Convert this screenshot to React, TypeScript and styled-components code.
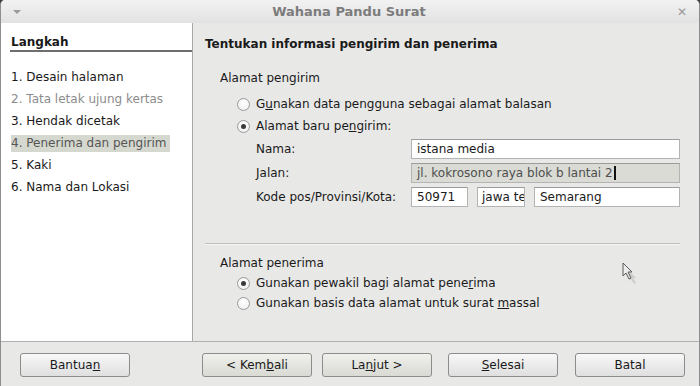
import React from "react";
import styled, {createGlobalStyle} from "styled-components";

const GlobalStyle = createGlobalStyle`
  html, body {
    margin: 0;
    padding: 0;
    background: #3c3c3c;
  }
  body {
    font-family: "DejaVu Sans", "Liberation Sans", sans-serif;
    font-size: 12px;
    color: #1a1a1a;
  }
`;

const Window = styled.div`
  width: 700px;
  height: 386px;
  box-sizing: border-box;
  display: flex;
  flex-direction: column;
  background: #e8e8e7;
  border-left: 1px solid #8e8e8e;
  border-right: 1px solid #8e8e8e;
  border-radius: 5px 5px 0 0;
  overflow: hidden;
`;

const TitleBar = styled.div`
  height: 23px;
  flex: none;
  display: flex;
  align-items: center;
  justify-content: space-between;
  padding: 0 12px 0 12px;
  background: linear-gradient(#f2f2f2, #e2e2e2);
  .title {
    font-size: 13px;
    font-weight: bold;
    color: #7c7c7c;
  }
  .menu {
    width: 0;
    height: 0;
    border-left: 4px solid transparent;
    border-right: 4px solid transparent;
    border-top: 4px solid #9a9a9a;
  }
  .close {
    color: #9a9a9a;
    font-size: 12px;
    font-weight: bold;
  }
`;

const Body = styled.div`
  flex: 1;
  display: flex;
  min-height: 0;
`;

const Sidebar = styled.div`
  width: 192px;
  flex: none;
  box-sizing: border-box;
  background: #ffffff;
  border-right: 1px solid #a8a8a8;
  padding: 11px 0 0 9px;
`;

const SideHeading = styled.div`
  font-weight: bold;
  line-height: 16px;
  padding-left: 1px;
  border-bottom: 2px solid #6e6e6e;
  margin-bottom: 14px;
`;

const StepRow = styled.div`
  height: 22px;
  display: flex;
  align-items: center;
  padding-left: 1px;
`;

const StepText = styled.span<{ $active?: boolean; $disabled?: boolean }>`
  line-height: 17px;
  padding-right: 3px;
  background: ${p => p.$active ? "#d5d8cf" : "transparent"};
  color: ${p => p.$disabled ? "#8c8c8c" : p.$active ? "#555" : "#1a1a1a"};
`;

const Main = styled.div`
  flex: 1;
  display: flex;
  flex-direction: column;
  padding: 13px 19px 0 12px;
`;

const PageHeading = styled.div`
  font-weight: bold;
  line-height: 16px;
  margin-bottom: 18px;
`;

const Section = styled.div`
  padding-left: 15px;
`;

const SectionTitle = styled.div`
  line-height: 16px;
`;

const Options = styled.div<{ $row: number; $top: number }>`
  padding-left: 17px;
  margin-top: ${p => p.$top}px;
  display: flex;
  flex-direction: column;
  > div {
    height: ${p => p.$row}px;
  }
`;

const OptionRow = styled.div`
  display: flex;
  align-items: center;
  gap: 6px;
`;

const Radio = styled.span<{ $checked?: boolean }>`
  width: 11px;
  height: 11px;
  flex: none;
  border-radius: 50%;
  border: 1px solid #9a9a9a;
  background: radial-gradient(circle at 50% 35%, #ffffff, #ececec);
  display: flex;
  align-items: center;
  justify-content: center;
  &::after {
    content: "";
    width: 5px;
    height: 5px;
    border-radius: 50%;
    background: ${p => p.$checked ? "#3a3a3a" : "transparent"};
  }
`;

const FormGrid = styled.div`
  display: grid;
  grid-template-columns: 155px 1fr;
  row-gap: 4px;
  margin: 2px 0 0 36px;
  align-items: center;
`;

const FieldRow = styled.div`
  display: flex;
  gap: 9px;
`;

const Field = styled.div<{ $width?: number; $selected?: boolean; $tight?: boolean }>`
  ${p => p.$width ? `width: ${p.$width}px; flex: none;` : "flex: 1;"}
  height: 20px;
  box-sizing: border-box;
  border: 1px solid #b4b4b4;
  border-top-color: #9c9c9c;
  background: ${p => p.$selected ? "#d9dbd4" : "#ffffff"};
  color: ${p => p.$selected ? "#4e4e4e" : "#1a1a1a"};
  padding: ${p => p.$tight ? "0 0 0 4px" : "0 5px"};
  line-height: 18px;
  white-space: nowrap;
  overflow: hidden;
  display: flex;
  align-items: center;
`;

const Caret = styled.span`
  width: 2px;
  height: 14px;
  flex: none;
  background: #111;
  margin-left: 1px;
`;

const Separator = styled.div`
  margin: 36px 0 10px 0;
  border-top: 1px solid #bdbdbd;
  border-bottom: 1px solid #f6f6f6;
`;

const CursorArea = styled.div`
  position: relative;
  svg {
    position: absolute;
    left: 401px;
    top: 6px;
  }
`;

const Footer = styled.div`
  height: 45px;
  flex: none;
  box-sizing: border-box;
  border-top: 1px solid #b0b0b0;
  display: flex;
  align-items: flex-start;
  padding: 11px 14px 0 19px;
`;

const Button = styled.button<{ $hover?: boolean; $space?: number }>`
  width: 110px;
  height: 24px;
  flex: none;
  margin-left: ${p => p.$space ?? 0}px;
  border: 1px solid #8c8c8c;
  border-radius: 3px;
  background: ${p => p.$hover
    ? "linear-gradient(#f0f0ec, #d9dad4)"
    : "linear-gradient(#f8f8f8, #dfdfdf)"};
  font-family: inherit;
  font-size: 12px;
  color: #1a1a1a;
  padding: 0;
`;

const ButtonGroup = styled.div`
  margin-left: auto;
  display: flex;
`;

const steps = [
  "Desain halaman",
  "Tata letak ujung kertas",
  "Hendak dicetak",
  "Penerima dan pengirim",
  "Kaki",
  "Nama dan Lokasi",
];

const App: React.FC = () => {
  return (
    <>
      <GlobalStyle/>
      <Window>
        <TitleBar>
          <span className={"menu"}/>
          <span className={"title"}>Wahana Pandu Surat</span>
          <span className={"close"}>✕</span>
        </TitleBar>
        <Body>
          <Sidebar>
            <SideHeading>Langkah</SideHeading>
            {steps.map((s, i) => (
              <StepRow key={s}>
                <StepText $active={i === 3} $disabled={i === 1}>{i + 1}. {s}</StepText>
              </StepRow>
            ))}
          </Sidebar>
          <Main>
            <PageHeading>Tentukan informasi pengirim dan penerima</PageHeading>
            <Section>
              <SectionTitle>Alamat pengirim</SectionTitle>
              <Options $row={22} $top={7}>
                <OptionRow><Radio/><span>G<u>u</u>nakan data pengguna sebagai alamat balasan</span></OptionRow>
                <OptionRow><Radio $checked/><span>Alamat baru pe<u>n</u>girim:</span></OptionRow>
              </Options>
              <FormGrid>
                <span>Nama:</span>
                <Field>istana media</Field>
                <span>Jalan:</span>
                <Field $selected>jl. kokrosono raya blok b lantai 2<Caret/></Field>
                <span>Kode pos/Provinsi/Kota:</span>
                <FieldRow>
                  <Field $width={57}>50971</Field>
                  <Field $width={48} $tight>jawa te</Field>
                  <Field>Semarang</Field>
                </FieldRow>
              </FormGrid>
            </Section>
            <Separator/>
            <Section>
              <CursorArea>
                <svg width="20" height="24" viewBox="0 0 20 24">
                  <path d="M6 8 L13 15 L10 15 L13 20 L11 21 L8 16 L6 18 Z" fill="#9a9a9a" opacity="0.35" transform="translate(2 2)"/>
                  <path d="M2 2 L2 15 L5 12 L8 18 L10 17 L7 11 L11 11 Z" fill="#ececec" stroke="#5a5a5a" strokeWidth="1"/>
                </svg>
              </CursorArea>
              <SectionTitle>Alamat penerima</SectionTitle>
              <Options $row={20} $top={2}>
                <OptionRow><Radio $checked/><span>Gunakan pewakil bagi alamat pene<u>r</u>ima</span></OptionRow>
                <OptionRow><Radio/><span>Gunakan basis data alamat untuk surat <u>m</u>assal</span></OptionRow>
              </Options>
            </Section>
          </Main>
        </Body>
        <Footer>
          <Button>Bantua<u>n</u></Button>
          <ButtonGroup>
            <Button $hover>&lt; Kem<u>b</u>ali</Button>
            <Button $hover $space={10}>La<u>n</u>jut &gt;</Button>
            <Button $space={16}><u>S</u>elesai</Button>
            <Button $space={17}>Batal</Button>
          </ButtonGroup>
        </Footer>
      </Window>
    </>
  );
};

export default App;
